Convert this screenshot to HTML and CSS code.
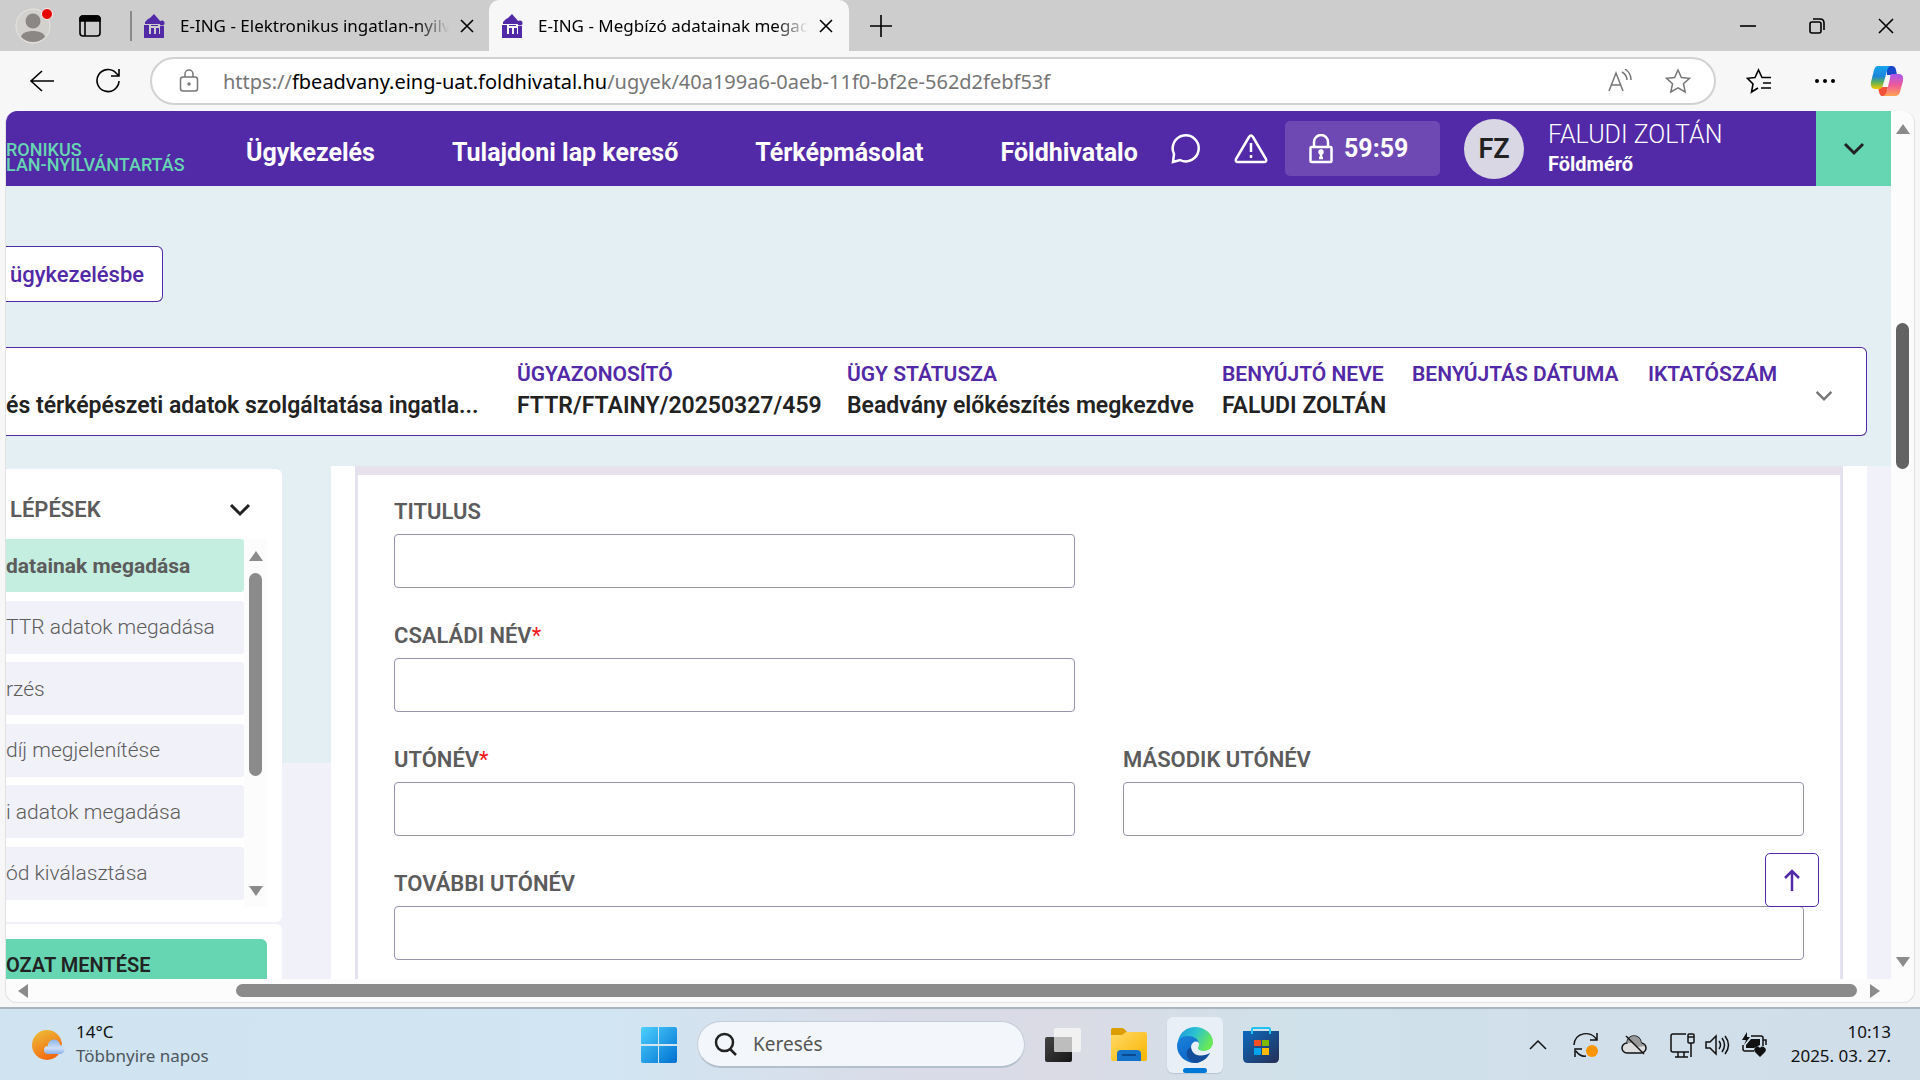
FILE: index.html
```html
<!DOCTYPE html>
<html lang="hu">
<head>
<meta charset="utf-8">
<title>E-ING - Megbízó adatainak megadása</title>
<link rel="stylesheet" href="styles.css">
</head>
<body>
<svg class="defs" width="0" height="0" aria-hidden="true">
  <symbol id="house" viewBox="0 0 22 24">
    <path fill="#5229a6" d="M10 0 17 8V10H1V8L4 5 6 4ZM0 11H5V20H7V14H10V20H12V14H15V20H16V12H20V24H0ZM7 11H14V12H7Z"/>
    <circle fill="#5229a6" cx="18" cy="9" r="2.500"/>
  </symbol>
  <symbol id="cross" viewBox="0 0 14 14"><path d="M1 1 13 13M13 1 1 13"/></symbol>
  <symbol id="down" viewBox="0 0 22 14"><path d="M2 2 11 11 20 2"/></symbol>
</svg>

<header class="tabs">
  <button class="profile" aria-label="Profil">
    <svg width="40" height="40" viewBox="0 0 40 40"><circle cx="18" cy="22" r="17" fill="#d3d1ce" stroke="#e8e6e3"/><circle cx="18" cy="17" r="7.500" fill="#8b8784"/><path d="M6 33C7 25 29 25 30 33A17 17 0 0 1 6 33Z" fill="#8b8784"/><circle cx="32" cy="10" r="5.500" fill="#e80000" stroke="#f5f5f5"/></svg>
  </button>
  <button class="tab-actions" aria-label="Lapok">
    <svg width="22" height="22" viewBox="0 0 22 22" fill="none" stroke="#000" stroke-width="1.600"><rect x="1" y="1" width="20" height="20" rx="3"/><path d="M1 6V4q0-3 3-3h14q3 0 3 3v2Z" fill="#000"/><path d="M6 6V21"/></svg>
  </button>
  <span class="divider"></span>
  <div class="tab">
    <svg width="22" height="24"><use href="#house"/></svg>
    <span class="tab-title">E-ING - Elektronikus ingatlan-nyilvántartás</span>
    <button aria-label="Lap bezárása"><svg class="line" width="14" height="14"><use href="#cross"/></svg></button>
  </div>
  <div class="tab tab-active">
    <svg width="22" height="24"><use href="#house"/></svg>
    <span class="tab-title">E-ING - Megbízó adatainak megadása</span>
    <button aria-label="Lap bezárása"><svg class="line" width="14" height="14"><use href="#cross"/></svg></button>
  </div>
  <button class="new-tab" aria-label="Új lap"><svg class="line" width="22" height="22" viewBox="0 0 22 22"><path d="M11 0V22M0 11H22"/></svg></button>
  <div class="window-controls">
    <button aria-label="Kis méret"><svg class="line" width="16" height="16" viewBox="0 0 16 16"><path d="M0 8H16"/></svg></button>
    <button aria-label="Előző méret"><svg class="line" width="16" height="16" viewBox="0 0 16 16"><rect x="1" y="4" width="11" height="11" rx="2"/><path d="M4 1H11q4 0 4 4V12"/></svg></button>
    <button aria-label="Bezárás"><svg class="line" width="16" height="16" viewBox="0 0 16 16"><path d="M1 1 15 15M15 1 1 15"/></svg></button>
  </div>
</header>

<div class="toolbar">
  <button class="back" aria-label="Vissza"><svg class="line" width="26" height="24" viewBox="0 0 26 24"><path d="M13 2 2 12 13 22M2 12H25"/></svg></button>
  <button class="reload" aria-label="Frissítés"><svg class="line" width="26" height="26" viewBox="0 0 26 26"><path d="M24 13A11 11 0 1 1 21 5L24 8M24 1V8H16"/></svg></button>
  <div class="address">
    <svg class="grey" width="20" height="24" viewBox="0 0 20 24"><rect x="1.500" y="8" width="17" height="14" rx="2.500"/><path d="M6 8V5a4 4 0 0 1 8 0V8"/><circle cx="10" cy="15" r="1"/></svg>
    <span class="url">https://<b>fbeadvany.eing-uat.foldhivatal.hu</b>/ugyek/40a199a6-0aeb-11f0-bf2e-562d2febf53f</span>
    <button aria-label="Felolvasás"><svg class="grey" width="26" height="24" viewBox="0 0 26 24"><path d="M2 22 9 4 16 22M4 16H14M15 3q5 3 5 8M18 0q6 4 6 11"/></svg></button>
    <button class="star" aria-label="Kedvencekhez adás"><svg class="grey" width="26" height="26" viewBox="0 0 26 26"><path d="M13 2 16.400 9.500 24.500 10.300 18.500 15.800 20.200 24 13 19.900 5.800 24 7.500 15.800 1.500 10.300 9.600 9.500Z"/></svg></button>
  </div>
  <div class="toolbar-end">
    <button aria-label="Kedvencek"><svg class="line" width="26" height="26" viewBox="0 0 26 26"><path d="M12 20 5.500 24 7 16 1.500 10.300 9 9.500 12.500 2 16 9.500H25M17 15H25M15 20H25"/></svg></button>
    <button aria-label="Beállítások"><svg width="22" height="6" viewBox="0 0 22 6"><circle cx="3" cy="3" r="2"/><circle cx="11" cy="3" r="2"/><circle cx="19" cy="3" r="2"/></svg></button>
    <button aria-label="Copilot"><svg width="34" height="32" viewBox="0 0 34 32">
      <defs><linearGradient id="ca" x2="0" y2="1"><stop stop-color="#16a5ee"/><stop offset=".450" stop-color="#1b84d8"/><stop offset=".700" stop-color="#5bb05c"/><stop offset="1" stop-color="#f6c900"/></linearGradient><linearGradient id="cb" x2="0" y2="1"><stop stop-color="#a957ef"/><stop offset=".500" stop-color="#ee5a9a"/><stop offset="1" stop-color="#ffa450"/></linearGradient></defs>
      <path d="M17 1h5q3 0 4 4l1 5H17Z" fill="#1746c9"/><path d="M8 22h10l-2 9h-4q-2 0-3-4Z" fill="#f0523a"/><path d="M8 1H20q-2 1-3 5L13 20q-1 4-4 4H5Q0 24 1 17L4 5q1-4 4-4Z" fill="url(#ca)"/><path d="M21 9h8q5 0 4 7l-3 11q-1 4-5 4H13q3-1 4-5l3-13q0-3 1-4Z" fill="url(#cb)"/></svg></button>
  </div>
</div>

<div class="frame">
 <div class="viewport">
  <div class="site-header">
    <a class="logo" href="#">RONIKUS<br>LAN-NYILVÁNTARTÁS</a>
    <nav>
      <a href="#">Ügykezelés</a><a href="#">Tulajdoni lap kereső</a><a href="#">Térképmásolat</a><a href="#">Földhivatalo</a>
    </nav>
    <div class="account">
      <button aria-label="Üzenetek"><svg class="white" width="30" height="30" viewBox="0 0 30 30"><path d="M2 28 3 20A13 13 0 1 1 9 26Z"/></svg></button>
      <button class="alert" aria-label="Figyelmeztetések"><svg class="white" width="34" height="30" viewBox="0 0 34 30"><path d="M15 3q2-3 4 0L32 25q1 3-2 3H4q-3 0-2-3ZM17 9V18M17 21V24"/></svg></button>
      <div class="timer"><svg class="white" width="24" height="30" viewBox="0 0 24 30"><rect x="1.500" y="13" width="21" height="15" rx="1"/><path d="M5 13V8a7 7 0 0 1 14 0V13M12 18V24M10 24H14" /><circle cx="12" cy="18" r="1.500"/></svg>59:59</div>
      <span class="avatar">FZ</span>
      <div class="user"><span>FALUDI ZOLTÁN</span><b>Földmérő</b></div>
      <button class="menu" aria-label="Felhasználói menü"><svg class="thick" width="22" height="14"><use href="#down"/></svg></button>
    </div>
  </div>

  <div class="case">
    <button class="return">ügykezelésbe</button>
    <section class="summary">
      <dl>
        <div><dt>&nbsp;</dt><dd>és térképészeti adatok szolgáltatása ingatla...</dd></div>
        <div><dt>ÜGYAZONOSÍTÓ</dt><dd>FTTR/FTAINY/20250327/459</dd></div>
        <div><dt>ÜGY STÁTUSZA</dt><dd>Beadvány előkészítés megkezdve</dd></div>
        <div><dt>BENYÚJTÓ NEVE</dt><dd>FALUDI ZOLTÁN</dd></div>
        <div><dt>BENYÚJTÁS DÁTUMA</dt><dd></dd></div>
        <div><dt>IKTATÓSZÁM</dt><dd></dd></div>
      </dl>
      <button class="expand" aria-label="Részletek"><svg class="thick muted" width="18" height="12" viewBox="0 0 22 14"><path d="M2 2 11 11 20 2"/></svg></button>
    </section>
  </div>

  <div class="content">
    <aside>
      <section class="steps">
        <h2>LÉPÉSEK <button aria-label="Lépések összecsukása"><svg class="thick" width="22" height="14"><use href="#down"/></svg></button></h2>
        <div class="step-area">
          <ol>
            <li class="current"><a href="#">datainak megadása</a></li>
            <li><a href="#">TTR adatok megadása</a></li>
            <li><a href="#">rzés</a></li>
            <li><a href="#">díj megjelenítése</a></li>
            <li><a href="#">i adatok megadása</a></li>
            <li><a href="#">ód kiválasztása</a></li>
          </ol>
          <div class="track-v inner">
            <svg width="16" height="12" viewBox="0 0 16 12"><path d="M8 1 15 11H1Z"/></svg>
            <span class="thumb"></span>
            <svg width="16" height="12" viewBox="0 0 16 12"><path d="M8 11 1 1H15Z"/></svg>
          </div>
        </div>
      </section>
      <section class="save"><button>OZAT MENTÉSE</button></section>
    </aside>
    <main>
      <form>
        <div class="field"><label for="titulus">TITULUS</label><input id="titulus" type="text"></div>
        <div class="field start"><label for="csaladi">CSALÁDI NÉV<i>*</i></label><input id="csaladi" type="text"></div>
        <div class="field start"><label for="uto">UTÓNÉV<i>*</i></label><input id="uto" type="text"></div>
        <div class="field"><label for="masodik">MÁSODIK UTÓNÉV</label><input id="masodik" type="text"></div>
        <div class="field wide"><label for="tovabbi">TOVÁBBI UTÓNÉV</label><input id="tovabbi" type="text"></div>
      </form>
    </main>
  </div>
  <button class="to-top" aria-label="Az oldal tetejére"><svg width="18" height="22" viewBox="0 0 18 22" fill="none" stroke="#5229a6" stroke-width="2.500"><path d="M9 22V2M2 9 9 2 16 9"/></svg></button>
 </div>
 <div class="track-v outer">
   <svg width="16" height="12" viewBox="0 0 16 12"><path d="M8 1 15 11H1Z"/></svg>
   <span class="thumb"></span>
   <svg width="16" height="12" viewBox="0 0 16 12"><path d="M8 11 1 1H15Z"/></svg>
 </div>
 <div class="track-h">
   <svg width="12" height="16" viewBox="0 0 12 16"><path d="M1 8 11 1V15Z"/></svg>
   <span class="thumb"></span>
   <svg width="12" height="16" viewBox="0 0 12 16"><path d="M11 8 1 1V15Z"/></svg>
 </div>
</div>

<footer class="taskbar">
  <button class="weather">
    <svg width="34" height="32" viewBox="0 0 34 32"><defs><linearGradient id="sun" x2=".500" y2="1"><stop stop-color="#edc23a"/><stop offset="1" stop-color="#f26a10"/></linearGradient><linearGradient id="cl" x2="0" y2="1"><stop stop-color="#8fb4ea"/><stop offset=".600" stop-color="#cfe0fa"/><stop offset="1" stop-color="#86aeea"/></linearGradient></defs><circle cx="15" cy="16" r="15" fill="url(#sun)"/><path d="M16 25a4 4 0 0 1 0-8 6 6 0 0 1 12-1 4.500 4.500 0 0 1 0 9Z" fill="url(#cl)"/></svg>
    <span>14°C<br><em>Többnyire napos</em></span>
  </button>
  <div class="apps">
    <button class="app" aria-label="Start"><svg width="36" height="36" viewBox="0 0 36 36"><defs><linearGradient id="win" x2="1" y2="1"><stop stop-color="#4cd0ff"/><stop offset="1" stop-color="#0070d0"/></linearGradient></defs><path fill="url(#win)" d="M2 0H17V17H0V2q0-2 2-2ZM18 0H34q2 0 2 2V17H18ZM0 19H17V36H2q-2 0-2-2ZM18 19H36V34q0 2-2 2H18Z"/></svg></button>
    <label class="search"><svg width="24" height="24" viewBox="0 0 24 24" fill="none" stroke="#222" stroke-width="2.500"><circle cx="10.500" cy="10.500" r="8.500"/><path d="M16 17 22 23"/></svg><input type="text" placeholder="Keresés" aria-label="Keresés"></label>
    <button class="app" aria-label="Feladatnézet"><svg width="36" height="36" viewBox="0 0 36 36"><defs><linearGradient id="tv" x2="1" y2="1"><stop stop-color="#444"/><stop offset="1" stop-color="#161616"/></linearGradient></defs><rect y="10" width="27" height="25" rx="2" fill="url(#tv)"/><rect x="9" y="1" width="27" height="24" rx="2" fill="#f2f2f2" fill-opacity=".950"/><path d="M9 10H27V25H11q-2 0-2-2Z" fill="#bdbdbd"/></svg></button>
    <button class="app" aria-label="Fájlkezelő"><svg width="36" height="36" viewBox="0 0 36 36"><defs><linearGradient id="fo" x2="1" y2="1"><stop stop-color="#ffd968"/><stop offset="1" stop-color="#f9b500"/></linearGradient></defs><path d="M0 3q0-2 2-2H11q2 0 5 4V14H0Z" fill="#dd9d05"/><path d="M0 8H11l4-3H34q2 0 2 2V32q0 2-2 2H2q-2 0-2-2Z" fill="url(#fo)"/><path d="M6 34V27q0-4 4-4H26q4 0 4 4V34Z" fill="#1473c8"/><path d="M11 28H25" stroke="#0b4a8f" stroke-width="2"/></svg></button>
    <button class="app active-app" aria-label="Microsoft Edge"><svg width="36" height="36" viewBox="0 0 36 36"><defs><linearGradient id="ea" x2="1" y2=".400"><stop stop-color="#1a94dc"/><stop offset=".500" stop-color="#2bc2d3"/><stop offset="1" stop-color="#67e858"/></linearGradient><linearGradient id="eb" x2=".600" y2="1"><stop stop-color="#1b83db"/><stop offset="1" stop-color="#0b62c4"/></linearGradient></defs><path d="M1 14C3 5 10 0 18 0c10 0 18 7 18 15 0 5-4 9-9 9-4 0-6-1-6-3 0-1 1-2 1-4 0-3-3-6-8-6C8 11 3 13 1 14Z" fill="url(#ea)"/><path d="M0 19C0 12 5 9 11 9c6 0 10 3 11 7-3-3-8-1-8 5 0 8 8 12 15 9-3 4-7 6-11 6C8 36 0 28 0 19Z" fill="url(#eb)"/><path d="M14 20c-2 8 6 14 15 10 2-1 4-3 4-4-6 4-19 4-19-6ZM14 20c-8 4-4 14 4 16C27 35 31 30 33 26 27 31 15 30 14 20Z" fill="#134d9b"/></svg></button>
    <button class="app" aria-label="Microsoft Store"><svg width="36" height="36" viewBox="0 0 36 36"><defs><linearGradient id="st" x2="1" y2="1"><stop stop-color="#0b6abf"/><stop offset="1" stop-color="#262f55"/></linearGradient></defs><path d="M9 7V2q0-1 1-1H26q1 0 1 1V7" fill="none" stroke="#22c2f5" stroke-width="2"/><path d="M0 4H36V31q0 5-5 5H5q-5 0-5-5Z" fill="url(#st)"/><path d="M9 4V7M27 4V7" stroke="#22c2f5" stroke-width="2"/><path d="M11 13H18V19H11Z" fill="#f25022"/><path d="M19 13H26V19H19Z" fill="#7fba00"/><path d="M11 21H18V28H11Z" fill="#00a4ef"/><path d="M19 21H26V28H19Z" fill="#ffb900"/></svg></button>
  </div>
  <div class="tray">
    <button class="more" aria-label="Rejtett ikonok"><svg class="tline" width="18" height="12" viewBox="0 0 18 12"><path d="M1 10 9 2 17 10"/></svg></button>
    <button class="sync" aria-label="Frissítés"><svg class="tline" width="26" height="26" viewBox="0 0 26 26"><path d="M1 13C2 0 18-2 24 8M24 1V8H17M2 25V17H9M3 19Q7 25 13 24"/><circle cx="19" cy="19" r="6" fill="#ff9500" stroke="none"/></svg></button>
    <button class="cloud" aria-label="OneDrive"><svg class="tline" width="26" height="20" viewBox="0 0 26 20"><path d="M6 18a5 5 0 0 1 0-10 7 7 0 0 1 14 0 5 5 0 0 1 0 10Z" fill="#ddd"/><path d="M6 8a7 7 0 0 1 14 0l4 3-8 1-5-4Z" fill="#999" stroke="none"/><path d="M5 1 23 19"/></svg></button>
    <button class="system" aria-label="Hálózat, hang, akkumulátor">
      <svg class="tline" width="26" height="26" viewBox="0 0 26 26"><path d="M17 2H4Q2 2 2 4V18Q2 20 4 20H20M9 20V25M15 20V25M6 25H19M22 11V25"/><rect x="19" y="2" width="6" height="9" rx="1"/><path d="M19 5H25"/></svg>
      <svg class="tline" width="26" height="22" viewBox="0 0 26 22"><path d="M1 8H5L11 2V20L5 14H1ZM14 7q3 4 0 8M17 4q5 7 0 14M20 2q7 9 0 18"/></svg>
      <svg class="tline" width="26" height="26" viewBox="0 0 26 26"><path d="M10 4H20Q22 4 22 6V14M2 13V17Q2 19 4 19H13M22 8H25V13"/><path d="M10 7H19V13L13 16H5V13ZM6 0 1 8H5L3 13 9 5H6ZM19 25 14 20a3 3 0 0 1 5-4 3 3 0 0 1 5 4Z" fill="#111" stroke="none"/></svg>
    </button>
    <button class="clock">10:13<br>2025. 03. 27.</button>
  </div>
</footer>
</body>
</html>
```
FILE: styles.css
```css
* { box-sizing: border-box; }
body {
  margin: 0;
  height: 100vh;
  display: flex;
  flex-direction: column;
  overflow: hidden;
  background: #f7f7f7;
  font-family: "Noto Sans", "Open Sans", sans-serif;
  color: #000;
}
button { border: 0; padding: 0; background: none; font: inherit; color: inherit; display: flex; align-items: center; justify-content: center; }
a { color: inherit; text-decoration: none; }
svg { display: block; flex: none; }
.defs { position: absolute; }
.line { fill: none; stroke: #000; stroke-width: 1.600; }
.grey { fill: none; stroke: #767676; stroke-width: 1.500; }
.white { fill: none; stroke: #fff; stroke-width: 2.500; }
.thick { fill: none; stroke: #222; stroke-width: 3; }
.muted { stroke: #777; }
.tline { fill: none; stroke: #111; stroke-width: 1.500; }

/* Tab strip */
.tabs { flex: none; height: 51px; display: flex; align-items: center; background: #cdcdcd; padding-left: 15px; }
.profile { width: 40px; height: 40px; margin-bottom: 4px; }
.tab-actions { margin-left: 24px; }
.divider { width: 2px; height: 30px; margin-left: 29px; background: #8a8a8a; }
.tab { display: flex; align-items: center; width: 357px; height: 51px; padding: 0 15px 0 12px; font-size: 17px; }
.tab-active { width: 360px; padding: 0 16px 0 13px; background: #f7f7f7; border-radius: 10px 10px 0 0; }
.tab-title { flex: 1; margin: 0 11px 0 14px; white-space: nowrap; overflow: hidden; -webkit-mask-image: linear-gradient(90deg, #000 88%, transparent); mask-image: linear-gradient(90deg, #000 88%, transparent); }
.new-tab { margin-left: 21px; }
.window-controls { margin-left: auto; display: flex; gap: 53px; padding-right: 26px; }

/* Address row */
.toolbar { flex: none; height: 60px; display: flex; align-items: center; padding: 0 16px 0 29px; }
.reload { margin-left: 40px; }
.address { flex: 1; display: flex; align-items: center; height: 48px; margin-left: 29px; padding: 0 23px 0 27px; border: 2px solid #d2d2d2; border-radius: 24px; background: #fff; }
.url { flex: 1; margin-left: 24px; font-size: 20px; color: #767676; white-space: nowrap; }
.url b { font-weight: 400; color: #000; }
.star { margin-left: 32px; }
.toolbar-end { display: flex; align-items: center; gap: 42px; margin-left: 30px; }
.toolbar-end button:last-child { margin-left: -8px; }

/* Framed page with its scroll bars */
.frame { flex: 1; min-height: 0; display: grid; grid-template: minmax(0, 1fr) 23px / minmax(0, 1fr) 23px; margin: 0 5px 4px; border: 1px solid #e2e2e2; border-top: 0; border-radius: 12px; overflow: hidden; background: #fcfcfc; }
.viewport { position: relative; overflow: hidden; display: flex; flex-direction: column; background: #f1f1fa; font-family: Roboto, sans-serif; font-size: 21px; }
.track-v { display: flex; flex-direction: column; align-items: center; fill: #8b8b8b; }
.track-h { display: flex; align-items: center; fill: #8b8b8b; padding: 0 10px 0 11px; }
.thumb { background: #8b8b8b; border-radius: 7px; }
.outer { padding: 12px 0 11px; }
.outer .thumb { width: 13px; height: 146px; margin: 188px 0 auto; background: #636363; }
.track-h .thumb { flex: 1; height: 13px; margin: 0 12px 0 207px; }

/* Site header */
.site-header { flex: none; height: 75px; display: flex; align-items: center; background: #5229a6; color: #fff; }
.logo { width: 240px; padding-top: 16px; font-size: 18px; line-height: 15px; font-weight: 500; color: #66d6b2; white-space: nowrap; }
nav { display: flex; gap: 77px; font-size: 25px; font-weight: 700; white-space: nowrap; padding-top: 7px; }
.account { margin-left: auto; height: 100%; display: flex; align-items: center; }
.alert { margin-left: 33px; }
.timer { display: flex; align-items: center; gap: 11px; width: 155px; height: 55px; margin-left: 17px; padding-left: 24px; border-radius: 5px; background: #6e49b4; font-size: 25px; font-weight: 700; }
.avatar { width: 60px; height: 60px; margin-left: 24px; border-radius: 50%; background: #d9d7e3; color: #222; font-size: 27px; font-weight: 600; display: flex; align-items: center; justify-content: center; }
.user { width: 268px; margin-left: 24px; font-size: 25px; line-height: 30px; font-weight: 300; }
.user span, .user b { display: block; }
.user b { font-size: 20px; line-height: 28px; font-weight: 700; }
.menu { width: 75px; height: 100%; background: #66d6b2; }

/* Case summary */
.case { flex: none; height: 280px; padding: 60px 24px 0 0; background: #e4eff4; }
.return { width: 157px; height: 56px; padding-right: 14px; border: 1px solid #5229a6; border-left: 0; border-radius: 0 6px 6px 0; background: #fff; color: #5229a6; font-size: 22px; font-weight: 500; }
.summary { height: 89px; margin-top: 45px; padding-right: 33px; display: flex; align-items: center; justify-content: space-between; border: 1px solid #5229a6; border-left: 0; border-radius: 0 6px 6px 0; background: #fff; }
.expand { padding-top: 8px; }
dl { margin: 0 0 3px; display: grid; grid-template-columns: 487px 306px 351px 166px 212px 130px; gap: 24px; font-size: 21px; line-height: 31px; font-weight: 600; white-space: nowrap; }
dt { color: #5229a6; }
dd { margin: 0; height: 31px; color: #222; font-size: 23px; }

/* Steps and form */
.content { flex: 1; min-height: 0; display: flex; }
aside { width: 325px; padding: 3px 49px 0 0; background: linear-gradient(#e4eff4 297px, #f1f1fa 297px); overflow: hidden; }
.steps { height: 453px; background: #fff; border-radius: 0 6px 6px 0; }
.steps h2 { margin: 0; height: 69px; padding: 12px 31px 0 4px; display: flex; align-items: center; justify-content: space-between; font-size: 22px; font-weight: 600; color: #5c5c5c; }
.step-area { display: flex; height: 369px; margin-right: 15px; }
ol { flex: 1; margin: 0; padding: 1px 0 7px; list-style: none; display: flex; flex-direction: column; justify-content: space-between; font-size: 21px; color: #5c5c5c; font-weight: 300; }
li { height: 53px; display: flex; align-items: center; background: #f1f1fa; border-radius: 0 3px 3px 0; white-space: nowrap; }
.current { background: #c4eee0; font-weight: 700; }
.inner { width: 23px; padding: 12px 0 10px; background: #fcfcfc; }
.inner .thumb { width: 13px; height: 203px; margin: 11px 0 auto; }
.save { margin-top: 2px; padding: 15px 15px 0 0; background: #fff; border-radius: 0 6px 0 0; }
.save button { width: 100%; height: 52px; justify-content: flex-start; border-radius: 0 6px 6px 0; background: #66d6b2; color: #222; font-size: 20px; font-weight: 600; }
main { flex: 1; padding: 0 24px; background: #fff; margin-right: 24px; }
form { height: 100%; display: grid; grid-template-columns: 1fr 1fr; align-content: start; gap: 32px 48px; padding: 21px 36px 0; border: 3px solid #e4e2ee; border-top: 9px solid #e6e1ed; border-bottom: 0; }
.start { grid-column: 1; }
.wide { grid-column: 1 / 3; }
.field { display: flex; flex-direction: column; gap: 6px; }
.field label { height: 32px; line-height: 32px; font-size: 22px; font-weight: 600; color: #5c5c5c; }
.field i { color: #f01818; font-style: normal; font-weight: 400; }
.field input { width: 100%; height: 54px; border: 1px solid #9695ab; border-radius: 4px; background: #fff; }
.to-top { position: absolute; right: 72px; bottom: 72px; width: 54px; height: 54px; border: 1px solid #5229a6; border-radius: 5px; background: #fff; }

/* Taskbar */
.taskbar { flex: none; height: 73px; display: grid; grid-template-columns: 1fr auto 1fr; align-items: center; border-top: 2px solid #a8b5bf; background: linear-gradient(90deg, #cfe4f0, #d2e5f2 32%, #d9dbe7 48%, #dadbe5 56%, #cfe1ea 68%, #d1dfea 82%, #d0deea); font-size: 17px; line-height: 24px; }
.weather { justify-self: start; margin-left: 32px; gap: 10px; text-align: left; color: #111; }
.weather em { font-style: normal; color: #4e565c; }
.weather span, .clock { padding-bottom: 2px; }
.apps { display: flex; gap: 10px; align-items: center; }
.app { width: 56px; height: 56px; }
.active-app { position: relative; background: #e9eff7; border-radius: 6px; box-shadow: 0 1px 1px #b8c4d2; }
.active-app::after { content: ""; position: absolute; bottom: 0; left: 16px; width: 24px; height: 5px; border-radius: 3px; background: #0078d7; }
.search { display: flex; align-items: center; gap: 15px; width: 328px; height: 47px; padding: 0 16px; border: 1px solid #c3cdd8; border-bottom: 2px solid #b4bfcc; border-radius: 24px; background: #f3f6fa; }
.search input { width: 200px; border: 0; padding: 0; background: none; font: inherit; font-size: 19px; }
.search input::placeholder { color: #555; opacity: 1; }
.tray { justify-self: end; display: flex; align-items: center; padding-right: 29px; color: #111; }
.sync { margin-left: 26px; }
.cloud { margin-left: 22px; }
.system { margin-left: 22px; gap: 10px; }
.clock { margin-left: 24px; text-align: right; }
```
